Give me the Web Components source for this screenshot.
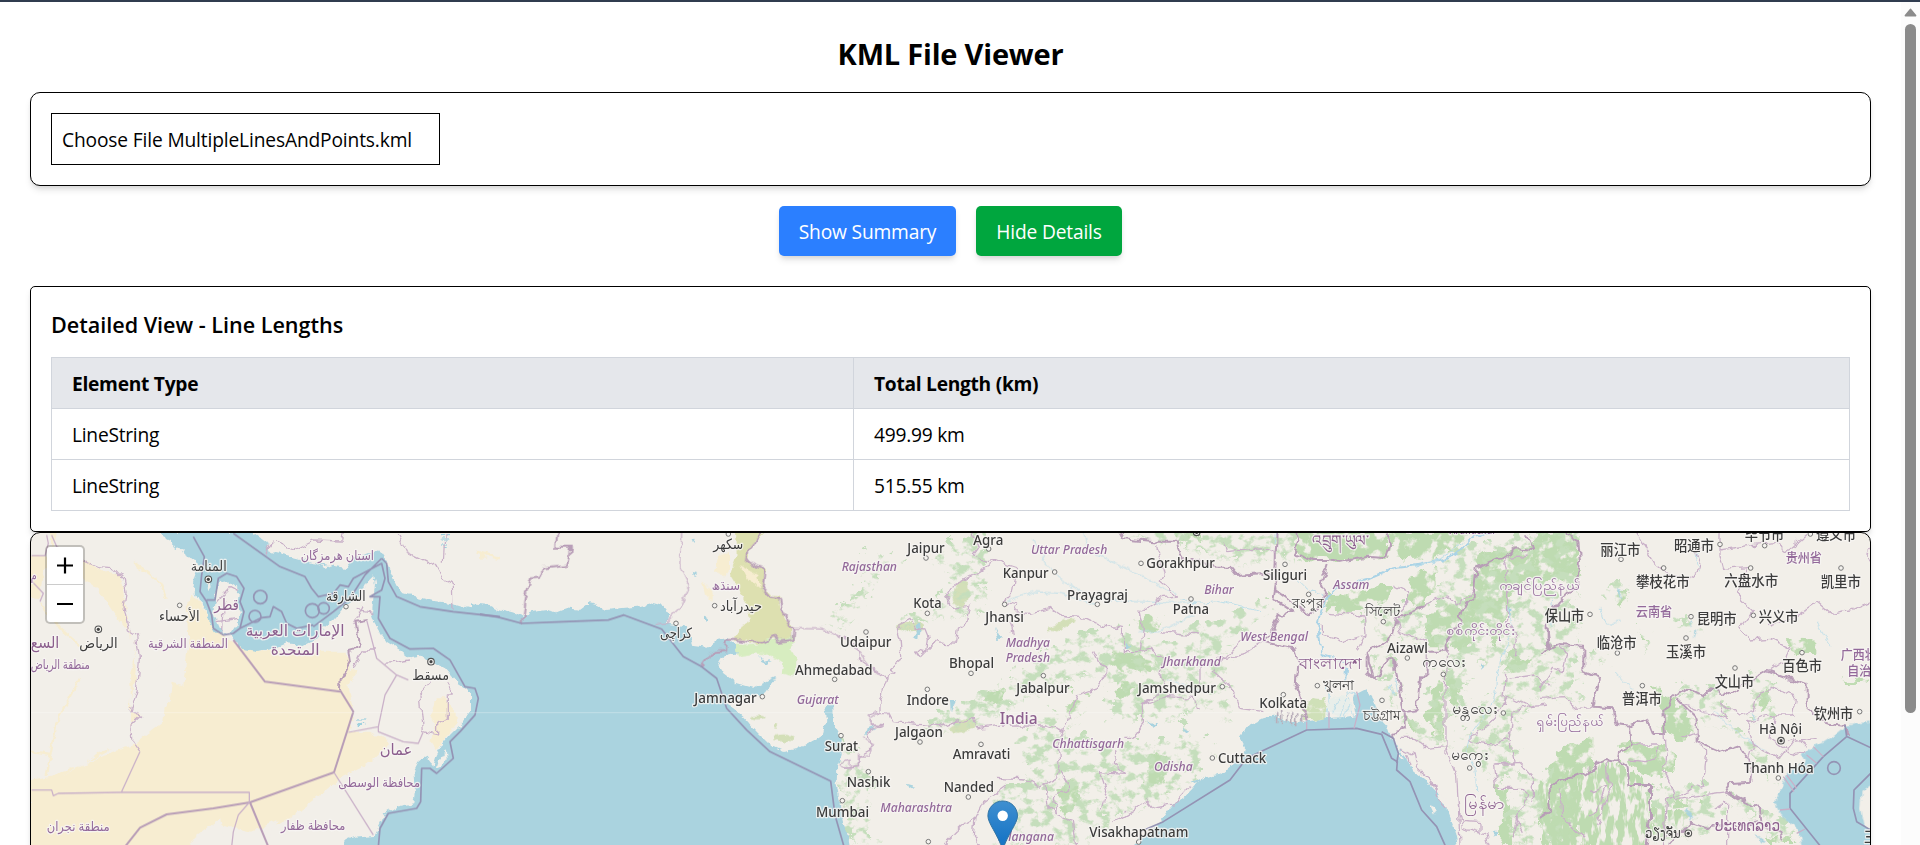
<!DOCTYPE html>
<html lang="en">
<head>
<meta charset="utf-8">
<title>KML File Viewer</title>
<style>
html,body{margin:0;height:100%;overflow:hidden;background:#fff}
body{font-family:"Open Sans","Noto Sans",sans-serif;color:#000}
</style>
</head>
<body>
<kml-app></kml-app>
<script>
const define = (name, html, init) => customElements.define(name, class extends HTMLElement {
  constructor() {
    super();
    this.attachShadow({ mode: 'open' }).innerHTML = html;
    if (init) init.call(this, this.shadowRoot);
  }
});

define('page-scrollbar', `<style>
:host{display:flex;flex-direction:column;align-items:center;width:19px;background:#fcfcfc;padding-top:6px;box-sizing:border-box}
svg{display:block;width:13px;height:9px}
i{display:block;width:11px;height:689px;border-radius:6px;background:#8b8b8b;margin-top:7px}
</style><svg viewBox="0 0 13 9"><path d="M6.5 1.5 11.5 7.5H1.5Z" fill="#8b8b8b" stroke="#8b8b8b" stroke-width="1.8" stroke-linejoin="round"/></svg><i></i>`);

define('file-panel', `<style>
:host{display:flex;box-sizing:border-box;height:94px;padding:20px;border:1px solid #000;border-radius:10px;background:#fff;box-shadow:0 5px 7.5px -1px #0000001a,0 2.5px 5px -2px #0000001a}
div{box-sizing:border-box;width:389px;height:52px;border:1px solid #000;padding:10px;font-size:19.2px;line-height:31px;white-space:nowrap;letter-spacing:-.15px}
</style><div><slot></slot></div>`);

define('action-button', `<style>
:host{display:block;height:50px;border-radius:5px;box-shadow:0 5px 7.5px -1px #0000001a,0 2.5px 5px -2px #0000001a}
button{all:unset;display:block;width:100%;height:50px;text-align:center;color:#fff;font-size:19.2px;line-height:52px;white-space:nowrap;letter-spacing:-.18px}
</style><button><slot></slot></button>`);

define('details-panel', `<style>
:host{display:block;box-sizing:border-box;height:246px;padding:20px;border:1px solid #000;border-radius:5px;background:#fff;box-shadow:0 5px 7.5px -1px #0000001a,0 2.5px 5px -2px #0000001a}
h2{margin:0 0 15px;font-size:21.6px;font-weight:600;line-height:36px;height:35px;letter-spacing:-.02px}
table{border-collapse:collapse;table-layout:fixed;width:1799px;font-size:19.2px;line-height:30px}
tr{height:51px}
td,th{box-sizing:border-box;border:1px solid #d1d5dc;text-align:left;padding:2px 20px 0;height:51px;letter-spacing:-.25px}
th{background:#e5e7eb;font-weight:700;letter-spacing:-.28px}
.a{width:802px}
</style><h2>Detailed View - Line Lengths</h2>
<table><tr><th class="a">Element Type</th><th>Total Length (km)</th></tr>
<tr><td>LineString</td><td>499.99 km</td></tr>
<tr><td>LineString</td><td>515.55 km</td></tr></table>`);

define('zoom-control', `<style>
:host{display:block;width:36px;height:75px;border:2px solid #0003;border-radius:5px;background:#fff;background-clip:padding-box}
svg{display:block}
</style><svg width="36" height="75" viewBox="0 0 36 75"><path d="M0 37.5h36" stroke="#ccc"/><path d="M10 18.5h16M18 10.5v16M10 57h16" stroke="#000" stroke-width="2.2"/></svg>`);

/* Labels: each region has its own origin, units are thirds of a pixel. */
const ORIGIN = { A: 20, B: 480, C: 800, D: 1180, E: 1540 };
const LABELS = [
['A',842,1062,104,'استان هرمزگان','s'],['A',512,620,139,'المنامة','c'],['A',583,657,255,'قطر','n'],['A',918,1037,229,'الشارقة','c'],
['A',417,539,288,'الأحساء','c'],['A',677,974,332,'الإمارات العربية','n'],['A',752,899,389,'المتحدة','n'],['A',384,624,369,'المنطقة الشرقية','s'],
['A',178,293,370,'الرياض','c'],['A',32,118,368,'السع','n'],['A',32,210,432,'منطقة الرياض','s'],['A',32,50,165,'م','s'],['A',1177,1287,466,'مسقط','c'],['A',1079,1177,690,'عمان','n'],
['A',955,1200,785,'محافظة الوسطى','s'],['A',80,269,919,'منطقة نجران','s'],['A',783,976,915,'محافظة ظفار','s'],
['B',700,790,72,'سكهر','c'],['B',695,780,195,'سنڌھ','s'],['B',720,846,258,'حيدرآباد','c'],['B',540,636,340,'كراچی','c'],['B',945,1178,450,'Ahmedabad','c'],['B',643,830,535,'Jamnagar','c'],['B',950,1076,538,'Gujarat','s'],
['C',322,434,84,'Jaipur','c'],['C',520,610,59,'Agra','c'],['C',125,291,139,'Rajasthan','s'],['C',693,922,87,'Uttar Pradesh','s'],['C',608,746,158,'Kanpur','c'],['C',801,984,224,'Prayagraj','c'],['C',340,425,249,'Kota','c'],['C',556,672,290,'Jhansi','c'],
['C',120,274,366,'Udaipur','c'],['C',617,750,366,'Madhya','s'],['C',617,750,410,'Pradesh','s'],['C',447,582,428,'Bhopal','c'],['C',649,809,503,'Jabalpur','c'],['C',320,447,539,'Indore','c'],['C',599,713,597,'India','n'],['C',285,429,635,'Jalgaon','c'],
['C',458,631,701,'Amravati','c'],['C',757,972,668,'Chhattisgarh','s'],['C',74,174,678,'Surat','c'],['C',140,271,785,'Nashik','c'],['C',431,582,802,'Nanded','c'],['C',48,207,875,'Mumbai','c'],['C',241,456,860,'Maharashtra','s'],['C',590,762,948,'Telangana','s'],
['C',868,1165,935,'Visakhapatnam','c'],['C',1062,1178,738,'Odisha','s'],['C',1014,1248,503,'Jamshedpur','c'],['C',1088,1263,422,'Jharkhand','s'],['C',1118,1227,266,'Patna','c'],['C',1039,1245,130,'Gorakhpur','c'],
['D',73,161,207,'Bihar','s'],['D',249,381,164,'Siliguri','c'],['D',460,568,193,'Assam','s'],['D',181,384,347,'West Bengal','s'],['D',238,381,550,'Kolkata','c'],['D',114,258,715,'Cuttack','c'],['D',621,744,384,'Aizawl','c'],
['D',396,566,64,'འབྲུག་ཡུལ་','n'],['D',337,432,248,'রংপুর','c'],['D',555,661,272,'সিলেট','c'],['D',356,544,433,'বাংলাদেশ','n'],['D',430,522,494,'খুলনা','c'],['D',548,663,584,'চট্টগ্রাম','c'],
['D',726,857,427,'ကလေး','c'],['D',799,1006,331,'စစ်ကိုင်းတိုင်း','s'],['D',958,1198,195,'ကချင်ပြည်နယ်','s'],['D',815,953,568,'မန္တလေး','c'],['D',812,925,706,'မကွေး','c'],['D',853,975,853,'မြန်မာ','n'],['D',1069,1269,602,'ရှမ်းပြည်နယ်','s'],['D',810,946,28,'Arunachal','s'],
['E',181,301,89,'丽江市','c'],['E',402,522,78,'昭通市','c'],['E',614,733,46,'毕节市','c'],['E',828,948,44,'遵义市','c'],['E',737,846,112,'贵州省','s'],['E',288,449,185,'攀枝花市','c'],['E',553,715,184,'六盘水市','c'],['E',842,963,186,'凯里市','c'],
['E',14,133,288,'保山市','c'],['E',287,397,274,'云南省','s'],['E',470,590,297,'昆明市','c'],['E',656,776,291,'兴义市','c'],['E',170,290,370,'临沧市','c'],['E',378,498,396,'玉溪市','c'],['E',727,846,438,'百色市','c'],['E',524,642,487,'文山市','c'],
['E',902,1010,401,'广西壮','s'],['E',922,1030,451,'自治区','s'],['E',246,365,538,'普洱市','c'],['E',821,940,583,'钦州市','c'],['E',657,786,626,'Hà Nội','c'],['E',611,821,745,'Thanh Hóa','c'],['E',525,720,918,'ປະເທດລາວ','n'],['E',315,422,940,'ວຽງຈັນ','c'],['E',972,1040,950,'三亚','c']
];
const DOTS = {
A:[[479,241],[978,245]], B:[[704,242],[588,295],[745,27],[847,515]],
C:[[378,99],[566,72],[764,141],[892,238],[382,265],[614,238],[198,321],[513,445],[104,463],[730,452],[382,493],[360,651],[543,658],[123,632],[205,740],[505,816],[127,827],[385,950],[1016,951],[1023,115],[1173,222]],
D:[[315,118],[386,208],[610,290],[682,399],[412,482],[127,485],[310,509],[606,526],[790,448],[970,564],[869,729],[97,699]],
E:[[243,103],[371,129],[540,58],[674,62],[811,27],[632,129],[903,129],[150,268],[453,275],[640,271],[438,339],[232,384],[786,383],[585,429],[307,482],[959,560],[715,759]]
};
const CAPITALS = { A:[[565,163],[235,313],[1233,410]], E:[[723,647],[445,925]], D:[[50,22]] };

const g = (k, body) => `<g transform="translate(${ORIGIN[k]} 525) scale(.33333)">${body}</g>`;
const p = (cls, d) => `<path class="${cls}" d="${d}"/>`;
const blobs = (cls, list) => list.map(([x, y, rx, ry, r = 0]) => `<ellipse class="${cls}" cx="${x}" cy="${y}" rx="${rx}" ry="${ry}" transform="rotate(${r} ${x} ${y})"/>`).join('');

const ground =
`<g filter="url(#coast)">` + g('A', p('des','M30 90 100 90 110 20 90 20 100 85 200 110 250 140 300 150 310 200 325 310 350 380 330 450 335 560 365 570 400 610 450 520 455 470 490 480 505 350 500 240 520 205 545 240 580 310 625 340 650 360 690 375 850 380 980 380 990 430 1010 440 985 480 1000 560 985 620 1050 620 1110 655 1040 720 960 760 900 810 820 870 790 890 700 920 600 900 520 940 500 970 30 970 30 765 100 750 190 720 240 680 310 660 350 660 330 600 330 540 350 440 345 360 325 320 300 290 230 190 150 130 70 130 60 220 30 215Z')
 + p('land','M120 760 250 690 340 660 430 590 440 480 400 440 440 400 380 350 360 400 350 500 335 555 365 570 330 600 330 640 240 690Z')
 + p('des','M1250 520 1275 520 1310 560 1310 600 1250 675 1235 650 1245 600 1230 570Z')
 + p('thinD','M60 230 120 310 190 370M180 460 110 590 80 750M30 680 90 690M340 110 420 170 440 220M1370 80 1440 100')
 + p('land','M600 880 620 970 520 970 530 930ZM770 885 740 970 700 920Z'))
+ g('B', p('olive','M765 20 850 20 805 80 800 115 855 130 850 190 870 212 900 215 905 260 935 315 930 345 895 350 885 335 850 355 765 345 780 310 810 285 800 240 775 190 750 150 770 90Z')
 + p('des','M715 90 750 80 750 130 735 155 705 140ZM665 165 695 200 695 230 675 210ZM780 120 835 150 840 190 800 160ZM0 80 20 100 0 100Z')
 + p('mint','M765 360 830 355 885 340 945 330 930 370 950 400 945 455 905 445 910 415 865 390 830 385 770 395Z')
 + blobs('olv',[[910,640,30,12],[835,577,22,6],[888,602,7,6]]))
+ g('C', blobs('olv',[[485,205,22,42,15],[330,305,42,14],[785,300,45,10,-22],[490,605,40,16,-15]]))
+ `</g><g filter="url(#rough)">`
+ g('D', p('forest','M350 20 630 20 625 95 560 100 480 110 380 105 345 70ZM630 20 880 20 850 45 790 90 710 105 640 95ZM440 205 560 200 600 180 640 180 630 225 550 260 440 262ZM985 380 1010 360 1025 400 1065 410 1020 440 980 440ZM900 90 960 70 1050 75 1080 20 1180 20 1190 160 1060 170 1000 200 980 270 950 380 920 290 880 310 870 400 800 350 810 370 750 370 740 280 790 235 845 245 880 200 885 140ZM700 150 770 130 760 200 720 250 680 230ZM765 470 790 480 790 640 770 640 740 590 735 560 762 555ZM690 585 715 585 710 630 690 620ZM810 440 840 460 835 550 810 540ZM950 790 990 790 1000 960 960 960 970 850ZM1140 770 1200 740 1200 960 1120 960 1090 870 1120 800Z')
 + p('mang','M375 530 400 515 435 520 440 560 430 585 375 580Z'))
+ g('E', p('forest','M0 20 115 25 120 140 100 165 0 170ZM735 345 835 350 835 390 780 390 735 360ZM330 480 400 515 440 560 470 600 430 650 370 620 365 540ZM80 650 155 640 155 700 110 750 40 770 30 730ZM250 665 350 655 410 690 400 740 340 760 260 705ZM300 315 325 350 320 370ZM390 830 440 820 450 840 400 845ZM480 820 500 820 500 845 480 845ZM970 840 995 840 995 880 970 870ZM910 470 990 460 980 480 920 480ZM680 940 740 930 780 960 690 960ZM665 500 690 500 690 540 660 560ZM225 190 260 200 250 235 225 230Z'))
+ g('C', p('forest','M880 390 940 385 1010 395 1070 410 1060 440 960 435ZM565 500 615 500 605 535 555 530ZM790 760 830 770 840 830 800 880 780 850ZM1050 690 1100 690 1140 730 1060 780 1030 760ZM1025 290 1080 290 1070 318 1025 318ZM955 480 1010 480 990 515 960 510ZM1120 20 1200 25 1200 50 1130 40Z'))
+ `</g><g filter="url(#speck)">`
+ g('C', p('fd','M880 380 1000 385 1080 400 1090 450 930 440ZM560 500 620 495 610 545 540 545ZM790 760 840 770 890 840 850 930 800 900 770 850ZM1030 690 1080 680 1200 700 1190 770 1100 830 1030 850 960 880 1010 780ZM820 510 860 540 810 620 770 590ZM1020 280 1080 290 1070 320 1020 320ZM950 480 1020 480 1000 540 950 520ZM1190 20 1200 60 1100 50 1060 30Z')
 + p('fs','M820 340 960 320 1010 350 1200 370 1200 560 1100 600 930 600 930 480 870 450 810 480 730 500 620 570 500 620 400 640 380 590 500 540 640 450 740 390ZM660 640 760 560 830 640 960 660 1050 660 1200 650 1200 770 1030 860 930 900 860 970 600 970 590 800 680 780ZM130 640 170 720 230 780 190 850 230 960 150 960 120 800ZM200 80 300 110 200 220 120 330 70 300 180 200ZM380 100 560 20 560 200 540 280 400 290 300 330 290 290 440 240 450 160ZM930 20 1200 20 1200 90 1060 60Z'))
 + g('D', p('fs','M0 25 350 20 350 120 280 110 200 130 0 80ZM0 310 120 300 260 230 270 260 170 340 140 450 150 600 50 540 0 560ZM0 600 100 680 40 750 0 800ZM550 260 740 240 740 390 640 340 560 480 600 350ZM600 400 640 390 660 520 640 560 600 480ZM640 580 800 620 800 680 700 650ZM780 80 900 60 1190 20 1190 540 1000 520 960 440 870 420 850 560 800 600 740 560 780 440ZM850 600 940 520 990 480 1060 540 1000 650 1000 760 950 790 860 700ZM1000 760 1180 740 1180 970 980 970Z'))
 + g('E', p('fs','M0 170 120 150 40 230ZM200 180 260 180 250 240 220 240ZM290 310 330 340 320 400ZM410 280 480 280 460 330 410 320ZM30 390 120 370 70 430ZM120 400 210 380 190 430ZM410 480 560 500 560 620 480 600ZM640 440 700 480 700 600 640 600ZM500 540 700 700 700 790 560 600ZM330 800 480 780 570 860 480 940 330 960ZM560 800 660 850 780 940 700 960 600 870Z'))
 + `</g><g filter="url(#streak)">`
 + g('E', p('forest','M0 780 60 750 190 700 270 740 330 780 325 970 0 970ZM330 850 440 860 430 900 330 960Z'))
 + `</g>`;

const water = `<g filter="url(#coast)">`
+ g('A', p('sea','M418 20 430 35 450 45 465 75 490 72 500 95 530 105 535 130 525 160 520 185 530 205 545 235 560 265 570 295 585 320 600 330 625 325 640 345 670 372 710 378 760 372 800 355 850 360 890 340 910 310 940 285 970 250 1000 230 1030 195 1045 165 1060 150 1065 180 1060 220 1055 270 1062 290 1080 320 1100 350 1140 375 1170 400 1200 395 1240 410 1280 435 1310 470 1340 490 1360 520 1350 560 1320 600 1290 630 1270 655 1250 690 1240 725 1225 705 1220 690 1195 710 1180 740 1185 800 1180 835 1130 845 1095 865 1080 900 1065 930 1000 935 975 945 965 970 1445 970 1445 255 1390 245 1350 250 1300 235 1240 228 1190 215 1150 205 1130 180 1115 150 1100 105 1080 75 1040 90 1000 100 980 130 930 120 880 115 830 100 790 90 750 80 740 50 720 35 700 20Z')
 + p('land','M600 172 620 168 655 190 650 230 660 260 650 295 630 325 605 325 590 290 580 260 585 220 592 190ZM558 165 568 165 572 190 565 198ZM1278 675 1280 700 1265 722 1250 728 1258 705ZM895 125 940 118 920 128Z')
 + p('lake','M1260 32h30M1265 45h20M1260 60h24M1268 68h12M1005 585h28M1010 598h26'))
+ g('B', p('sea','M-30 235 30 240 60 255 100 265 130 275 160 260 200 255 230 262 260 250 300 255 320 240 350 240 380 255 420 250 470 245 510 235 550 245 565 265 560 295 620 305 640 360 680 365 710 345 740 340 765 360 770 385 730 395 715 420 730 445 770 475 820 488 860 470 890 455 870 480 850 510 820 510 770 520 735 535 760 550 790 575 830 620 870 660 910 678 950 672 1000 645 1030 625 1040 580 1035 540 1060 540 1062 600 1085 640 1085 690 1072 720 1070 780 1080 830 1090 880 1105 940 1110 970 -30 970Z')
 + p('lk','M635 140 655 145 645 150ZM672 275 685 280 672 290ZM838 390 855 410 875 405 860 418 845 412ZM635 40 645 42 640 58ZM330 232 350 236 330 242ZM1165 610 1190 605 1150 630Z'))
+ g('D', p('sea','M195 665 190 690 170 710 130 740 60 765 20 810 0 825 -30 845 -60 890 -120 945 -150 970 835 970 820 900 800 850 780 830 770 800 740 770 700 740 680 700 655 670 635 640 620 600 600 580 585 530 560 490 520 510 530 570 500 575 440 580 370 590 330 590 290 570 250 580 200 605 180 635Z')
 + p('land','M750 840 770 850 762 866ZM770 790 800 820 785 840ZM690 690 720 700 715 720ZM655 680 672 700 660 700Z')
 + p('lk','M35 770 70 755 50 775ZM900 415 915 420 905 438ZM935 920 955 920 945 935ZM985 250 995 255 988 275Z'))
+ g('E', p('sea','M995 590 950 595 910 605 880 630 850 650 820 665 785 690 795 710 760 730 735 760 720 790 705 830 720 870 760 900 780 935 785 970 995 970Z')
 + p('land','M1000 775 965 800 960 850 970 900 1000 915Z')
 + p('lk','M232 190 243 200 240 222ZM448 285 455 290 450 308ZM466 315 472 320 465 340ZM438 845 460 875 445 880ZM635 560 645 580 640 585ZM645 925 680 950 665 950Z'))
+ g('C', p('lk','M1040 590 1075 595 1060 605ZM975 355 995 360 970 375ZM1150 605 1170 615 1150 620ZM450 525 468 525 452 558ZM350 295 362 305 358 340 335 345 350 330ZM320 780 340 785 325 792ZM200 610 225 600 198 632ZM585 305 605 345 595 345Z'))
+ `</g><g filter="url(#coast)">`
+ g('D', p('river','M940 22 880 35 840 75 790 105 700 122 640 130 560 165 470 190 435 225 415 300 425 390 500 410 495 470')
 + p('riv','M700 125 770 110 850 50M340 150 380 190 430 210M0 220 50 235 120 230 240 260M290 20 285 60M980 240 1000 320 960 400 940 530 870 630 860 680 885 730 890 800M440 580 450 500M520 570 500 500 530 510')
 + blobs('landd',[[480,545,38,30]]) + p('riv','M455 565 480 520M480 575 500 520M450 540 440 470M490 580 510 540M640 460 650 500M630 480 640 510')
 + p('stripe','M290 560V595M305 555V598M320 565V595M335 560V598M350 565V598M365 565V590'))
+ g('C', p('riv','M700 40 740 120 790 170 880 220 1000 230 1200 235M850 20 870 80 960 120 1060 170 1130 210M620 230 700 200 780 205 890 240M1020 320 1080 320 1180 270M1200 500 1100 460'))
+ g('E', p('riv','M180 250 200 300 240 290M225 440 280 500M520 560 600 630 680 680M830 290 870 360M40 200 30 300M470 80 480 140'))
+ `</g>`;

const borders = `<g filter="url(#wob)">`
+ g('A', p('bs','M190 105 235 125 280 128 310 160 318 205 312 240 325 315 350 330 358 400 350 490 330 560 365 570 333 600 335 645 360 680M590 230 630 185 650 195M590 290 655 280M610 230 605 320M1235 470 1200 510 1210 620M1210 620 1250 630 1250 595 1285 580 1285 510 1300 510 1280 475M1100 415 1170 405M1000 435 1030 375 1065 375M765 50 820 75 880 45 965 48 970 25M1135 25 1160 80 1250 125 1270 160 1300 180 1302 260M1275 25 1270 110M735 85 755 50M1000 300 1030 240M1010 250 1060 260')
 + p('bn','M960 495 962 460 990 410 985 375 1020 365 1010 290 1040 285'))
+ g('B', p('bn','M232 20 228 68 270 68 262 122 190 130 180 158 150 160 135 215 125 295M850 20 805 75 800 112 855 130 848 185 870 212 900 215 905 250 937 310 935 345 895 350 885 335 850 355 765 345 740 345 738 375 700 378 665 425')
 + p('bs','M605 20 602 130 628 185 600 250 560 290 530 300M937 310 1030 312 1070 330 1120 360 1165 420 1200 450M1200 560 1170 580 1170 600 1200 605M1150 640 1178 660 1170 690 1135 690 1135 725 1100 730 1085 715 1110 705 1110 735'))
+ g('C', p('bs','M115 330 170 360 175 400 260 460 240 530 240 560 210 570 215 600 250 602 200 620 215 670 180 690 175 725 130 730M240 560 265 560 280 590 420 605 460 590 520 580 530 612 610 600 740 600 795 620 775 660 780 720 770 760 735 780 720 790 680 765 590 760M260 460 285 440 270 430 305 400 300 340 290 300 330 280 345 310 375 315 385 340 380 380 350 375 365 395 410 350 470 355 475 310 500 290 510 240 460 250 440 210 460 180 530 145 590 105 650 125 640 200 610 230 650 240 640 260 690 265 750 250 780 270 860 280 900 300 970 310 970 380 1020 380 1030 310 1020 260 1090 215 1130 210 1080 170 1090 150 1070 60M520 20 535 70 520 90 560 110 590 105M1020 380 1050 370 1090 400 1080 450 1100 480 1030 540 1030 600 1000 640 970 640M880 380 900 420 920 440 890 490 830 510 795 620M1030 540 1100 515 1180 520 1190 550 1200 545M900 740 920 800 900 860M900 740 970 745 940 720 945 680M735 780 740 840 770 870 820 890 830 960M770 870 760 820 810 790 780 740M620 780 550 830 525 880 490 900 430 960M940 890 990 860 1040 825 1060 850 1120 840 1170 785M1080 320 1200 330M630 290 640 330M525 880 520 930 540 960')
 + p('bn','M960 20 970 40 1080 50 1130 50 1140 95 1180 110 1200 100'))
+ g('D', p('bn','M50 108 110 125 150 125 170 150 240 145 285 160 290 20M345 20 355 50 345 85 400 105 440 105 480 110 560 95 620 100 630 60 620 20M285 160 290 200 330 230 390 265 430 240 435 200 420 180 440 120M290 160 280 220 340 260 300 270 280 310 250 350 340 370 355 415 350 480 375 560 380 590M640 440 640 400 620 400 600 450 580 460 560 380 600 360 640 330 650 280 740 240M640 400 660 490 670 550 680 560 710 555 720 460 740 440 740 380 800 380 800 350 840 290 850 250 880 220 890 130 960 100 1010 70 1060 75 1040 25M670 550 675 610 640 620 640 640M560 380 560 440 590 470')
 + p('bs','M440 262 550 270 555 330 490 350 430 330 430 300M555 330 530 380M130 50 140 80 260 70 290 90M190 340 130 400 100 440 150 480 180 550 250 560M60 480 60 430 110 400 190 390 250 350M640 180 680 200 680 240 660 260M650 280 660 320 740 350M740 240 800 210 830 240 880 200M800 380 795 500 795 690M660 640 700 640 740 670 795 665 830 750 835 840 850 910 920 930 930 965M835 885 900 890 900 930M870 630 930 600 980 510 1050 545 1100 540M980 440 970 540M990 460 1060 450 1110 480M870 630 870 650 930 660 990 640 1000 720 940 720 950 790 1030 790 1040 820 1010 880 1030 920M990 640 1000 560 1060 540M940 720 1020 715 1060 760 1060 830M980 140 970 100 1040 90M980 140 980 290 1010 330 1000 400M835 840 840 960M1000 940 1010 880M660 670 700 690 710 730 760 770 770 820 800 850M680 690 690 720M750 760 770 800'))
+ g('E', p('bn','M75 25 115 50 120 110 110 180 60 230 20 280 20 340 30 375 60 360 130 365 130 440 180 460 160 545 220 550 230 600 270 605 320 580 340 630 375 630 370 560 400 515 440 490 490 515 515 490 570 510 680 435 800 480 800 550 850 590 910 600 925 630M410 520 470 580 470 650 540 680 600 660 610 690 640 715 630 770 570 775 555 800 660 850 665 900 720 920 730 950M270 605 275 660 240 680 235 710 190 705 140 745 60 765 25 800 30 860 0 880M235 710 260 730 265 780 330 780 330 880 320 965M665 890 510 910 450 890 390 960M20 285 30 370 0 385')
 + p('bs','M290 25 340 110 380 145 440 165 475 140 480 110 470 80 500 50M540 25 540 90 550 130 620 125 590 210 640 260 600 310 630 345 690 340 750 370 740 400 680 440M540 75 700 50 740 80 800 30M690 305 760 280 830 230 870 265 930 255 990 230M990 60 980 90 990 110M0 495 40 430 70 440 80 380 50 360M0 520 70 515 110 550 160 545M430 540 560 580 540 530 600 570 640 560 650 510 700 490 770 515 760 570 700 570 620 590 640 660 720 700 760 650 830 640M470 650 500 680 490 780 380 820 370 960M275 660 350 660 350 700 320 710 265 705M375 630 380 680 370 730 410 820 560 800M420 640 470 620M700 570 690 640 760 690 790 680M530 850 560 830 560 960M150 800 200 780 180 840 150 870M60 790 65 870 130 940M200 710 210 800 170 900M640 660 620 720 640 770M740 650 770 640 800 670'))
+ `</g>`
+ g('A', p('bn','M640 345 735 470 960 500M960 495 1000 560 942 742 690 832 580 850 440 868 360 908 315 965M690 832 745 965')
 + p('bs','M360 680 305 800M35 795 95 795 100 812 115 805 305 802 688 802 688 832M35 92 75 92 85 55 80 30M95 30 110 65 150 90M32 165 70 205 60 230M688 832 655 870 640 920 635 965M985 622 1075 605 1095 510 1130 450 1165 465M1075 605 1075 620 1150 650 1195 655 1210 620M942 742 1060 930M1040 285 1070 400 1130 450')
 + p('sea-b','M520 35 553 95 545 150 540 200 560 230 575 270 580 310 610 330 640 325 660 310 672 260 660 230 672 190 650 155 620 145 595 160 585 225 560 225M640 25 780 125 855 155 875 190 895 215 940 205 960 180 985 185 1000 160 1085 115 1095 160 1085 195 1050 215 1080 215 1075 280 1110 340 1170 372 1240 370 1290 405 1335 485 1365 490 1375 520 1365 570 1320 620 1290 650 1300 700 1250 745 1230 730 1205 730 1202 830 1190 850 1105 865 1080 910 1075 965M1085 100 1100 115 1105 170 1130 215 1200 245 1300 260 1440 275M880 305 940 260 990 220 1035 150 1085 100M660 310 725 278 750 275 760 245 785 260 800 295 830 310 880 300')
 + '<g class="sea-b"><circle cx="721" cy="216" r="20"/><circle cx="705" cy="274" r="18"/><circle cx="877" cy="257" r="21"/><circle cx="911" cy="250" r="17"/></g>')
+ g('B', p('sea-b','M0 268 50 275 125 295 250 290 385 285 432 270 545 312 610 395 665 425 710 460 725 505 740 550 800 615 870 680 1052 768 1065 870 1092 965'))
+ g('D', p('sea-b','M-120 920 -50 890 150 765 200 700 380 615 530 610 605 628 635 700 652 710 650 735 690 770 725 855 770 905 797 965M605 620 640 640 655 685 650 715')
 + p('bs','M447 610V560M522 610 540 540 530 500M380 612V590'))
+ g('E', p('sea-b','M915 600 920 635 850 695 750 805 750 850 840 962M922 635 992 668M992 745 942 795 940 850 950 890 992 915')
 + p('bs','M730 755 762 800M740 750 770 790M720 855 750 852M770 925 795 912M800 690 830 715M820 665 850 695') + '<circle class="sea-b" cx="882" cy="729" r="19"/>');

const labels = LABELS.map(([k, a, b, y, t, c]) => {
  const X = ORIGIN[k] + a / 3, w = (b - a) / 3, cx = X + w / 2;
  const style = c === 's' && /^[A-Za-z ]+$/.test(t) ? 'italic' : 'normal';
  return `<text class="${c}" font-style="${style}" x="${cx.toFixed(2)}" y="${(525 + y / 3).toFixed(2)}" textLength="${w.toFixed(2)}" lengthAdjust="spacingAndGlyphs">${t}</text>`;
}).join('');
const dots = Object.entries(DOTS).map(([k, l]) => l.map(([x, y]) => `<circle class="dot" cx="${ORIGIN[k] + x / 3}" cy="${525 + y / 3}" r="2.3"/>`).join('')).join('')
 + Object.entries(CAPITALS).map(([k, l]) => l.map(([x, y]) => `<circle class="cap" cx="${ORIGIN[k] + x / 3}" cy="${525 + y / 3}" r="3.3"/><circle cx="${ORIGIN[k] + x / 3}" cy="${525 + y / 3}" r="1.6" fill="#444"/>`).join('')).join('');
const region = 'filterUnits="userSpaceOnUse" x="31" y="520" width="1850" height="335" color-interpolation-filters="sRGB"';

define('map-view', `<style>
:host{display:grid;box-sizing:border-box;height:700px;border:1px solid #000;border-radius:10px;overflow:hidden;background:#f2efe9;box-shadow:0 5px 7.5px -1px #0000001a,0 2.5px 5px -2px #0000001a}
svg.map{display:block;width:1839px;height:312px;grid-area:1/1}
zoom-control{grid-area:1/1;margin:12px 0 0 14px;z-index:1}
.land{fill:#f2efe9}.landd{fill:#e8eeea}.des{fill:#f7edd1}.thinD{fill:none;stroke:#f7edd1;stroke-width:7}
.olive{fill:#dde0b0}.olv{fill:#d3dfb8}.mint{fill:#d7edc0}.mang{fill:#cfe0b8}
.forest,.fd{fill:#bedbb1}.fs{fill:#c5debc}
.sea,.lk{fill:#aad3df}.lake{fill:none;stroke:#8fcbdd;stroke-width:3}
.river{fill:none;stroke:#aad3e6;stroke-width:6}.riv{fill:none;stroke:#c0dfe9;stroke-width:3}
.stripe{fill:none;stroke:#b9aeb9;stroke-width:5}
.bn{fill:none;stroke:#b89db7;stroke-width:6;stroke-linejoin:round}
.bs{fill:none;stroke:#c9b0c8;stroke-width:3.8;stroke-linejoin:round}
.sea-b{fill:none;stroke:#9493b4;stroke-width:5;stroke-linejoin:round}
text{font-family:"Noto Sans","Noto Sans CJK SC","DejaVu Sans",sans-serif;text-anchor:middle;paint-order:stroke;stroke:#f7f5f2;stroke-opacity:.85;stroke-width:2.6px;stroke-linejoin:round}
.c{font-size:14.3px;font-weight:500;fill:#3c3c3c}.s{font-size:13px;font-weight:500;fill:#93699a}.n{font-size:15.5px;font-weight:500;fill:#8c5f8e}
.dot{fill:#f5f3ef;stroke:#777;stroke-width:1}.cap{fill:#f5f3ef;stroke:#555;stroke-width:1.1}
</style>
<zoom-control></zoom-control>
<svg class="map" viewBox="31 533 1839 312">
<defs>
<filter id="coast" ${region}><feTurbulence type="fractalNoise" baseFrequency=".12" numOctaves="3" seed="4"/><feDisplacementMap in="SourceGraphic" scale="7" xChannelSelector="R" yChannelSelector="G"/></filter>
<filter id="wob" ${region}><feTurbulence type="fractalNoise" baseFrequency=".1" numOctaves="2" seed="9"/><feDisplacementMap in="SourceGraphic" scale="9" xChannelSelector="R" yChannelSelector="G" result="d"/><feGaussianBlur stdDeviation=".25"/></filter>
<filter id="rough" ${region}><feTurbulence type="fractalNoise" baseFrequency=".08" numOctaves="4" seed="2" result="n"/><feDisplacementMap in="SourceGraphic" in2="n" scale="18" xChannelSelector="R" yChannelSelector="G" result="d"/><feColorMatrix in="n" type="matrix" values="0 0 0 0 0 0 0 0 0 0 0 0 0 0 0 7 0 0 0 -2.2" result="m"/><feComposite in="d" in2="m" operator="in"/></filter>
<filter id="speck" ${region}><feTurbulence type="fractalNoise" baseFrequency=".09 .11" numOctaves="4" seed="11" result="n"/><feDisplacementMap in="SourceGraphic" in2="n" scale="36" xChannelSelector="R" yChannelSelector="G" result="d"/><feColorMatrix in="n" type="matrix" values="0 0 0 0 0 0 0 0 0 0 0 0 0 0 0 0 6 0 0 -2.9" result="m"/><feComposite in="d" in2="m" operator="in"/></filter>
<filter id="streak" ${region}><feTurbulence type="fractalNoise" baseFrequency=".16 .06" numOctaves="3" seed="6" result="n"/><feDisplacementMap in="SourceGraphic" in2="n" scale="16" xChannelSelector="R" yChannelSelector="G" result="d"/><feColorMatrix in="n" type="matrix" values="0 0 0 0 0 0 0 0 0 0 0 0 0 0 0 0 8 0 0 -3.3" result="m"/><feComposite in="d" in2="m" operator="in"/></filter>
<linearGradient id="pin" x1="0" y1="0" x2="0" y2="1"><stop offset="0" stop-color="#3f8fd0"/><stop offset=".8" stop-color="#1976c6"/></linearGradient>
</defs>
${ground}${water}${borders}
<path d="M31 712.7H1870" stroke="#fff" stroke-opacity=".3"/>
${dots}${labels}
<path d="M1002.7 801c-8.3 0-14.8 6.600-14.800 14.900 0 7.600 9.800 18 14.800 34.100 5-16.100 14.800-26.500 14.800-34.100 0-8.300-6.500-14.900-14.800-14.900Z" fill="url(#pin)" stroke="#3274a3"/>
<circle cx="1002.7" cy="815.8" r="5.200" fill="#fff"/>
</svg>`);

define('kml-app', `<style>
:host{display:grid;grid-template-columns:1901px 19px;box-sizing:border-box;height:845px;border-top:2px solid #303c4f;overflow:hidden}
main{padding:28px 30px 0;min-width:0}
h1{margin:0 0 17px;font-size:29px;line-height:47px;height:45px;font-weight:700;text-align:center;letter-spacing:-.2px}
nav{display:flex;justify-content:center;gap:20px;margin:20px 0 30px}
.b{width:177px;background:#2b7fff}.g{width:146px;background:#00a63e}
</style>
<main><h1>KML File Viewer</h1>
<file-panel>Choose File MultipleLinesAndPoints.kml</file-panel>
<nav><action-button class="b">Show Summary</action-button><action-button class="g">Hide Details</action-button></nav>
<details-panel></details-panel>
<map-view></map-view></main>
<page-scrollbar></page-scrollbar>`);
</script>
</body>
</html>
